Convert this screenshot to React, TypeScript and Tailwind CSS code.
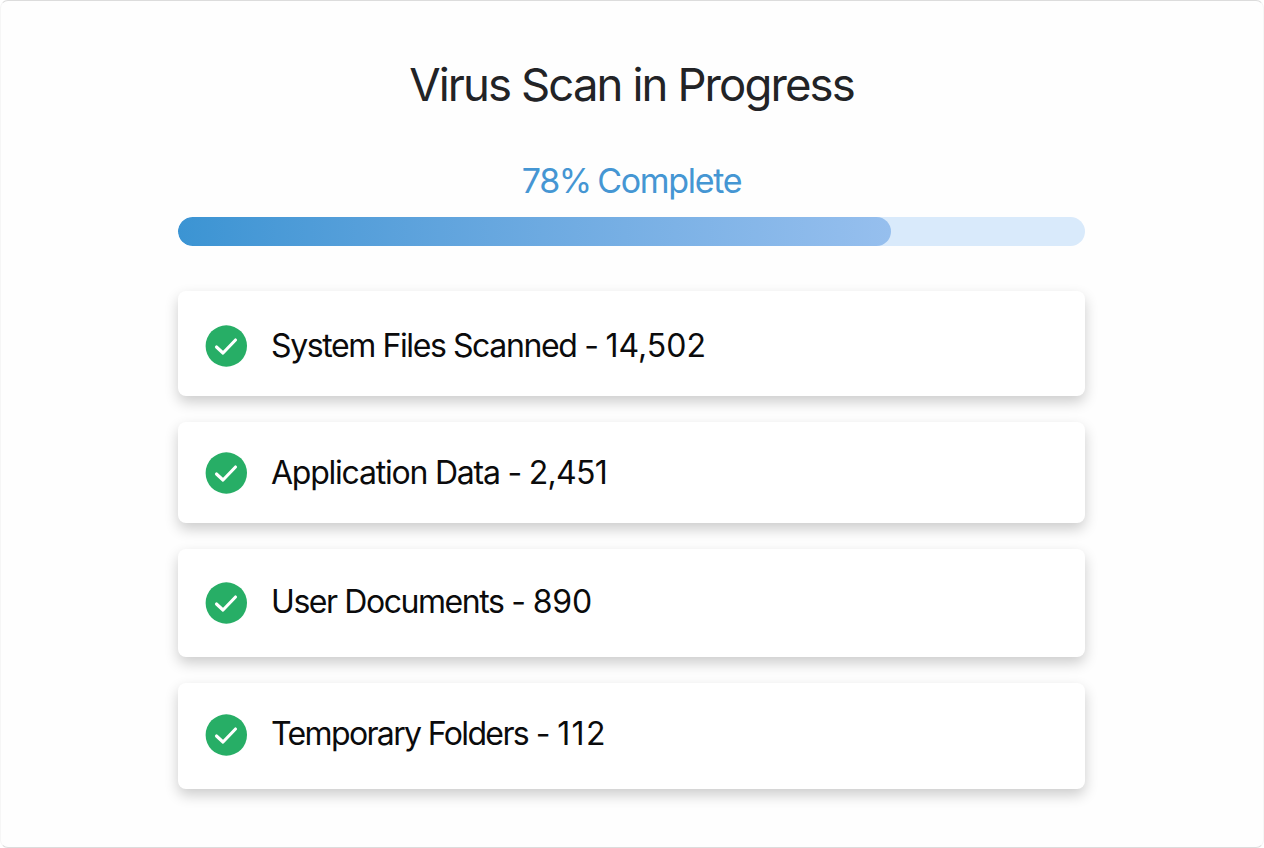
interface ScanItem {
  name: string;
  count: string;
  row: string;
  nameStyle: string;
  countStyle: string;
  textOffset: string;
}

const items: ScanItem[] = [
  { name: 'System Files Scanned', count: '14,502', row: 'h-[105px] pt-1', nameStyle: 'tracking-[-1.4px]', countStyle: 'tracking-[0px]', textOffset: '' },
  { name: 'Application Data', count: '2,451', row: 'h-[101px]', nameStyle: 'tracking-[-1.23px]', countStyle: 'tracking-[-0.7px]', textOffset: '' },
  { name: 'User Documents', count: '890', row: 'h-[108px]', nameStyle: 'tracking-[-1.43px]', countStyle: 'tracking-[-0.2px]', textOffset: 'pb-[2px]' },
  { name: 'Temporary Folders', count: '112', row: 'h-[106px] pb-[2px]', nameStyle: 'tracking-[-1.64px]', countStyle: 'tracking-[1.4px]', textOffset: 'pb-[3px]' },
];

function CheckIcon() {
  return (
    <svg className="size-[42px] shrink-0" viewBox="0 0 42 42" fill="none">
      <circle cx="21.3" cy="21" r="20.7" fill="#27ae66" />
      <path d="M11.5 22L18 28L30.5 15" stroke="#fff" strokeWidth="3.1" strokeLinecap="round" strokeLinejoin="round" />
    </svg>
  );
}

export default function App() {
  return (
    <main className="h-[848px] w-[1264px] overflow-hidden rounded-lg border border-x-[#f6f6f6] border-y-[#dcdcdc] bg-[#fefefe] pr-px font-['Inter',sans-serif]">
      <div className="mx-auto flex w-[907px] flex-col">
        <h1 className="mt-[56px] text-center text-[45.5px] leading-[56px] tracking-[-1.9px] text-[#222326]">
          Virus Scan in Progress
        </h1>
        <p className="mt-[48px] text-center text-[34px] leading-[40px] tracking-[-1.3px] [word-spacing:-2px] text-[#4596d3]">
          78% Complete
        </p>
        <div className="mt-[16px] h-[29px] overflow-hidden rounded-full bg-[#d9eafb]">
          <div className="h-full w-[713px] rounded-full bg-linear-to-r from-[#3b94d3] to-[#96bfee]" />
        </div>
        <ul className="mt-[45px] flex flex-col gap-[26px]">
          {items.map(({ name, count, row, nameStyle, countStyle, textOffset }) => (
            <li
              key={name}
              className={`flex items-center gap-6 rounded-lg bg-white pl-[27px] shadow-[0_6px_14px_rgba(0,0,0,0.2)] ${row}`}
            >
              <CheckIcon />
              <p className={`text-[32px] leading-10 whitespace-pre text-[#0b0b0c] ${textOffset}`}>
                <span className={nameStyle}>{name}</span>
                <span className="tracking-[-1.2px]">{' - '}</span>
                <span className={countStyle}>{count}</span>
              </p>
            </li>
          ))}
        </ul>
      </div>
    </main>
  );
}
